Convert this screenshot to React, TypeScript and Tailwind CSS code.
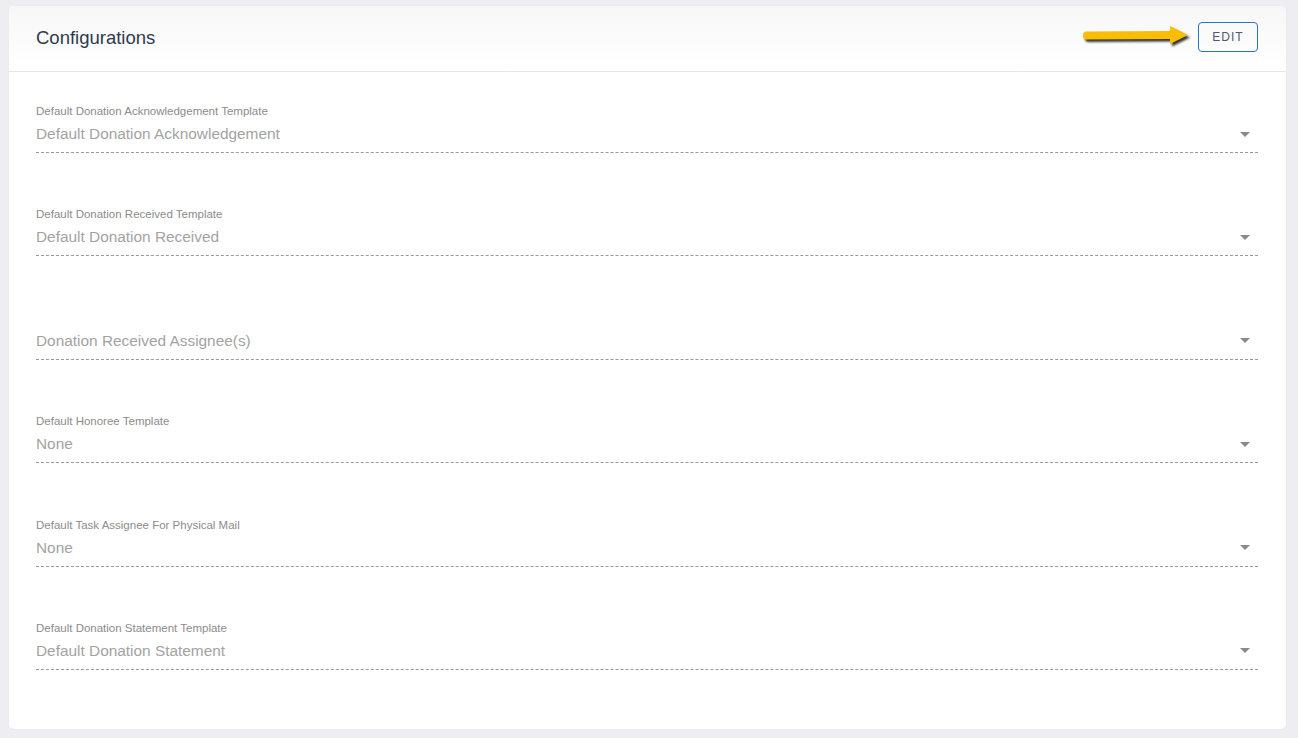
import React from "react";

const fields: { label?: string; value: string }[] = [
  { label: "Default Donation Acknowledgement Template", value: "Default Donation Acknowledgement" },
  { label: "Default Donation Received Template", value: "Default Donation Received" },
  { value: "Donation Received Assignee(s)" },
  { label: "Default Honoree Template", value: "None" },
  { label: "Default Task Assignee For Physical Mail", value: "None" },
  { label: "Default Donation Statement Template", value: "Default Donation Statement" },
];

function Arrow() {
  return (
    <svg width="110" height="28" viewBox="0 0 110 28" className="block">
      <defs>
        <filter id="sh" x="-10%" y="-30%" width="130%" height="180%">
          <feGaussianBlur stdDeviation="1" />
        </filter>
      </defs>
      <g transform="translate(2,2.5)" filter="url(#sh)" fill="#1f1f1f" opacity="0.9">
        <path d="M4 8.5 L88 8 L88 3 L106 12 L88 21 L88 16 L4 16.5 Q1 16.5 1 12.5 Q1 8.5 4 8.5 Z" />
      </g>
      <path d="M4 8.5 L88 8 L88 3 L106 12 L88 21 L88 16 L4 16.5 Q1 16.5 1 12.5 Q1 8.5 4 8.5 Z" fill="#fbbc04" />
    </svg>
  );
}

export default function App() {
  return (
    <div
      className="min-h-[738px] w-full bg-[#ededf2] pt-[6px] pl-[9px] pr-[12px] pb-[9px]"
      style={{ fontFamily: '"Liberation Sans", Arial, sans-serif' }}
    >
      <div className="rounded-[5px] bg-white shadow-[0_0_2px_rgba(0,0,0,0.04)]">
        <div className="flex h-[66px] items-center justify-between rounded-t-[5px] border-b border-[#e6e6e6] bg-gradient-to-b from-[#f7f7f7] to-white pl-[27px] pr-[28px]">
          <div className="text-[18.5px] leading-[22px] text-[#2f3a4c] mt-[-2px]">Configurations</div>
          <div className="flex items-center gap-[6px] mt-[-3px]">
            <Arrow />
            <button className="h-[30px] w-[60px] rounded-[4px] border border-[#1f78c8] text-[12px] tracking-[1px] text-[#4e5a73]">
              EDIT
            </button>
          </div>
        </div>
        <div className="flex flex-col gap-[54.4px] pt-[32px] pb-[59px] pl-[27px] pr-[28px]">
          {fields.map((f, i) => (
            <div key={i}>
              <div className="h-[14px] text-[11.5px] leading-[14px] text-[#8c8c8c]">{f.label ?? ""}</div>
              <div className="flex items-center justify-between border-b border-dashed border-[#9a9a9a] pt-[6px] pb-[8px]">
                <div className="text-[15.4px] leading-[20px] text-[#a3a3a3]">{f.value}</div>
                <div className="mr-[8px] h-0 w-0 border-l-[5px] border-r-[5px] border-t-[5px] border-l-transparent border-r-transparent border-t-[#8a8a8a]" />
              </div>
            </div>
          ))}
        </div>
      </div>
    </div>
  );
}
